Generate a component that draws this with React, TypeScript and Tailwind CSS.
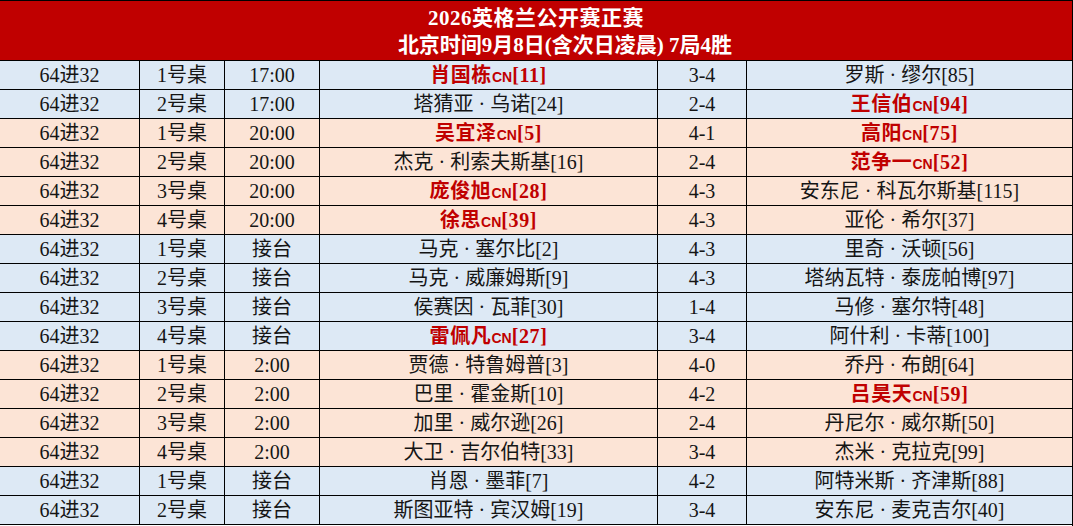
type Side = { name: string; cn?: boolean; seed: string };
type Match = {
  table: string;
  time: string;
  left: Side;
  score: string;
  right: Side;
  tone: "blue" | "peach";
};

const m = (
  table: string,
  time: string,
  left: Side,
  score: string,
  right: Side,
  tone: "blue" | "peach"
): Match => ({ table, time, left, score, right, tone });

const MATCHES: Match[] = [
  m("1号桌", "17:00", { name: "肖国栋", cn: true, seed: "11" }, "3-4", { name: "罗斯 · 缪尔", seed: "85" }, "blue"),
  m("2号桌", "17:00", { name: "塔猜亚 · 乌诺", seed: "24" }, "2-4", { name: "王信伯", cn: true, seed: "94" }, "blue"),
  m("1号桌", "20:00", { name: "吴宜泽", cn: true, seed: "5" }, "4-1", { name: "高阳", cn: true, seed: "75" }, "peach"),
  m("2号桌", "20:00", { name: "杰克 · 利索夫斯基", seed: "16" }, "2-4", { name: "范争一", cn: true, seed: "52" }, "peach"),
  m("3号桌", "20:00", { name: "庞俊旭", cn: true, seed: "28" }, "4-3", { name: "安东尼 · 科瓦尔斯基", seed: "115" }, "peach"),
  m("4号桌", "20:00", { name: "徐思", cn: true, seed: "39" }, "4-3", { name: "亚伦 · 希尔", seed: "37" }, "peach"),
  m("1号桌", "接台", { name: "马克 · 塞尔比", seed: "2" }, "4-3", { name: "里奇 · 沃顿", seed: "56" }, "blue"),
  m("2号桌", "接台", { name: "马克 · 威廉姆斯", seed: "9" }, "4-3", { name: "塔纳瓦特 · 泰庞帕博", seed: "97" }, "blue"),
  m("3号桌", "接台", { name: "侯赛因 · 瓦菲", seed: "30" }, "1-4", { name: "马修 · 塞尔特", seed: "48" }, "blue"),
  m("4号桌", "接台", { name: "雷佩凡", cn: true, seed: "27" }, "3-4", { name: "阿什利 · 卡蒂", seed: "100" }, "blue"),
  m("1号桌", "2:00", { name: "贾德 · 特鲁姆普", seed: "3" }, "4-0", { name: "乔丹 · 布朗", seed: "64" }, "peach"),
  m("2号桌", "2:00", { name: "巴里 · 霍金斯", seed: "10" }, "4-2", { name: "吕昊天", cn: true, seed: "59" }, "peach"),
  m("3号桌", "2:00", { name: "加里 · 威尔逊", seed: "26" }, "2-4", { name: "丹尼尔 · 威尔斯", seed: "50" }, "peach"),
  m("4号桌", "2:00", { name: "大卫 · 吉尔伯特", seed: "33" }, "3-4", { name: "杰米 · 克拉克", seed: "99" }, "peach"),
  m("1号桌", "接台", { name: "肖恩 · 墨菲", seed: "7" }, "4-2", { name: "阿特米斯 · 齐津斯", seed: "88" }, "blue"),
  m("2号桌", "接台", { name: "斯图亚特 · 宾汉姆", seed: "19" }, "3-4", { name: "安东尼 · 麦克吉尔", seed: "40" }, "blue"),
];

function Player({ side }: { side: Side }) {
  if (side.cn) {
    return (
      <span className="font-bold text-[#c00000] tracking-[0.6px]">
        {side.name}
        <span className="font-['Liberation_Sans',sans-serif] text-[14px] font-bold tracking-normal">CN</span>
        [{side.seed}]
      </span>
    );
  }
  return (
    <span>
      {side.name}[{side.seed}]
    </span>
  );
}

export default function App() {
  return (
    <div className="w-[1073px] h-[526px] overflow-hidden bg-white border-r border-black font-['Liberation_Serif','Noto_Sans_CJK_SC',serif] text-[#151515]">
      {/* title bar */}
      <div className="h-[61px] bg-[#c00000] border-t border-b border-black flex flex-col items-center justify-center pt-[3px] text-white font-bold text-[21px] leading-[27px]">
        <div className="tracking-[0.5px]">2026英格兰公开赛正赛</div>
        <div className="pl-[58px]">北京时间9月8日(含次日凌晨) 7局4胜</div>
      </div>

      {MATCHES.map((row, i) => (
        <div
          key={i}
          className={`h-[29px] grid grid-cols-[140px_85px_95px_338px_89px_1fr] border-b border-black divide-x divide-black text-[20px] leading-none ${
            row.tone === "blue" ? "bg-[#dde9f5]" : "bg-[#fce4d6]"
          }`}
        >
          <div className="flex items-center justify-center">64进32</div>
          <div className="flex items-center justify-center">{row.table}</div>
          <div className="flex items-center justify-center">{row.time}</div>
          <div className="flex items-center justify-center">
            <Player side={row.left} />
          </div>
          <div className="flex items-center justify-center">{row.score}</div>
          <div className="flex items-center justify-center">
            <Player side={row.right} />
          </div>
        </div>
      ))}
    </div>
  );
}
